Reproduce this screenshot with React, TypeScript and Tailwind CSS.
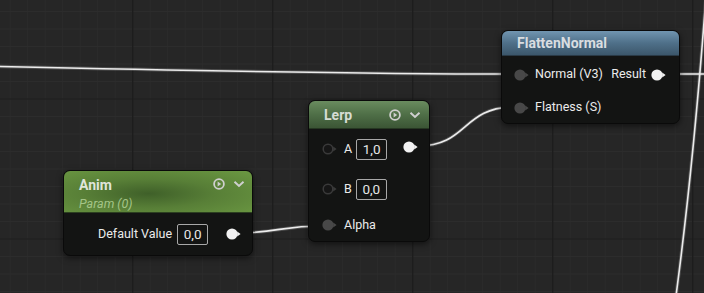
import React from "react";

type PinKind = "in" | "open" | "out";

function Pin({ kind }: { kind: PinKind }) {
  const fill = kind === "out" ? "#f2f2f2" : kind === "in" ? "#484848" : "#161616";
  const tri = kind === "out" ? "#f2f2f2" : kind === "in" ? "#484848" : "#3a3a3a";
  return (
    <svg width="16" height="12" viewBox="0 0 16 12" className="shrink-0">
      <circle
        cx="6"
        cy="6"
        r={kind === "open" ? 4.8 : 5.6}
        fill={fill}
        stroke={kind === "open" ? "#3a3a3a" : "none"}
        strokeWidth="1.5"
      />
      <polygon points="11.2,3.6 14.6,6 11.2,8.4" fill={tri} />
    </svg>
  );
}

function HeaderIcons() {
  return (
    <div className="flex items-center gap-[8px]">
      <svg width="12" height="12" viewBox="0 0 12 12">
        <circle cx="6" cy="6" r="4.9" fill="none" stroke="#cfcfcf" strokeWidth="1.8" />
        <polygon points="4.6,3.5 8.2,6 4.6,8.5" fill="#cfcfcf" />
      </svg>
      <svg width="12" height="8" viewBox="0 0 12 8">
        <polyline points="1.5,1.8 6,6 10.5,1.8" fill="none" stroke="#cfcfcf" strokeWidth="2" />
      </svg>
    </div>
  );
}

function ValueBox({ value, w }: { value: string; w: string }) {
  return (
    <div
      className={`${w} h-[21px] flex items-center justify-center border border-[#a8a8a8] rounded-[2px] text-[13.5px] text-[#e6e6e6]`}
    >
      {value}
    </div>
  );
}

function Grid() {
  const minorX: number[] = [];
  const minorY: number[] = [];
  for (let x = 10.2; x < 704; x += 17.5) minorX.push(x);
  for (let y = 11.5; y < 293; y += 17.5) minorY.push(y);
  const majorX = [132.7, 272.7, 412.7, 552.7, 692.7];
  const majorY = [99, 239];
  return (
    <svg className="absolute inset-0" width="704" height="293">
      {minorX.map((x) => (
        <line key={"mx" + x} x1={x} y1="0" x2={x} y2="293" stroke="#2c2c2c" strokeWidth="1" />
      ))}
      {minorY.map((y) => (
        <line key={"my" + y} x1="0" y1={y} x2="704" y2={y} stroke="#2c2c2c" strokeWidth="1" />
      ))}
      {majorX.map((x) => (
        <line key={"Mx" + x} x1={x} y1="0" x2={x} y2="293" stroke="#1c1c1c" strokeWidth="1.2" />
      ))}
      {majorY.map((y) => (
        <line key={"My" + y} x1="0" y1={y} x2="704" y2={y} stroke="#1c1c1c" strokeWidth="1.2" />
      ))}
    </svg>
  );
}

function Wires() {
  const wires = [
    "M -2 66.5 C 250 72, 400 74, 516 74",
    "M 664 74 L 706 74",
    "M 706 -4 C 702 50, 694 160, 676 296",
    "M 418 146 C 468 146, 462 107, 514 107",
    "M 241 233 C 280 232, 282 226, 323 226",
  ];
  return (
    <svg className="absolute inset-0" width="704" height="293">
      {wires.map((d) => (
        <g key={d}>
          <path d={d} fill="none" stroke="rgba(255,255,255,0.18)" strokeWidth="3.5" />
          <path d={d} fill="none" stroke="#ececec" strokeWidth="1.6" />
        </g>
      ))}
    </svg>
  );
}

const nodeBox =
  "absolute flex flex-col rounded-[7px] bg-[#131413] border border-[#0a0a0a] shadow-[0_2px_6px_rgba(0,0,0,0.55)] overflow-hidden";

export default function App() {
  return (
    <div className="relative w-[704px] h-[293px] overflow-hidden bg-[#262626] font-['Roboto',sans-serif]">
      <Grid />
      <Wires />

      {/* FlattenNormal */}
      <div className={`${nodeBox} left-[501px] top-[30px] w-[179px] h-[94px]`}>
        <div className="h-[25px] shrink-0 flex items-center pl-[15px] bg-gradient-to-b from-[#7195b0] via-[#4f7089] to-[#3c576b] border-b border-[#2a3a46]">
          <span className="text-[14px] font-bold text-[#d9dde0] leading-none">FlattenNormal</span>
        </div>
        <div className="flex justify-between pt-[2px] pl-[12px] pr-[12px]">
          <div className="flex flex-col">
            <div className="h-[33px] flex items-center gap-[5px]">
              <Pin kind="in" />
              <span className="text-[12.5px] text-[#ebebeb]">Normal (V3)</span>
            </div>
            <div className="h-[33px] flex items-center gap-[5px]">
              <Pin kind="in" />
              <span className="text-[12.5px] text-[#ebebeb]">Flatness (S)</span>
            </div>
          </div>
          <div className="flex flex-col">
            <div className="h-[33px] flex items-center gap-[5px]">
              <span className="text-[12.5px] text-[#ebebeb]">Result</span>
              <Pin kind="out" />
            </div>
          </div>
        </div>
      </div>

      {/* Lerp */}
      <div className={`${nodeBox} left-[308px] top-[100px] w-[122px] h-[142px]`}>
        <div className="h-[28px] shrink-0 flex items-center justify-between pl-[15px] pr-[8px] bg-gradient-to-b from-[#6a8c5f] via-[#4f6f47] to-[#3b5535] border-b border-[#263722]">
          <span className="text-[14px] font-bold text-[#d6dcd3] leading-none">Lerp</span>
          <HeaderIcons />
        </div>
        <div className="flex justify-between pl-[13px] pr-[10px]">
          <div className="flex flex-col">
            <div className="h-[40px] flex items-center">
              <Pin kind="open" />
              <span className="ml-[6px] mr-[4px] text-[12.5px] text-[#ebebeb]">A</span>
              <ValueBox value="1,0" w="w-[31px]" />
            </div>
            <div className="h-[40px] flex items-center">
              <Pin kind="open" />
              <span className="ml-[6px] mr-[4px] text-[12.5px] text-[#ebebeb]">B</span>
              <ValueBox value="0,0" w="w-[31px]" />
            </div>
            <div className="h-[32px] flex items-center gap-[6px]">
              <Pin kind="in" />
              <span className="text-[12.5px] text-[#ebebeb]">Alpha</span>
            </div>
          </div>
          <div className="flex flex-col pt-[2px]">
            <div className="h-[32px] flex items-center">
              <Pin kind="out" />
            </div>
          </div>
        </div>
      </div>

      {/* Anim */}
      <div className={`${nodeBox} left-[63px] top-[170px] w-[190px] h-[86px]`}>
        <div className="h-[42px] shrink-0 flex justify-between pl-[15px] pr-[7px] pt-[6px] bg-[radial-gradient(ellipse_at_45%_55%,#3f6029_0%,#587f37_45%,#6b9842_100%)] border-b border-[#2c4020]">
          <div className="flex flex-col">
            <span className="text-[14px] font-bold text-[#dfe5da] leading-[16px]">Anim</span>
            <span className="text-[12.5px] italic text-[#a4c487] leading-[16px] mt-[3px]">Param (0)</span>
          </div>
          <div className="pt-[1px]">
            <HeaderIcons />
          </div>
        </div>
        <div className="h-[44px] flex items-center pl-[34px] pr-[10px]">
          <span className="text-[12.5px] text-[#ebebeb] mr-[5px]">Default Value</span>
          <ValueBox value="0,0" w="w-[31px]" />
          <div className="ml-auto flex items-center">
            <Pin kind="out" />
          </div>
        </div>
      </div>
    </div>
  );
}
